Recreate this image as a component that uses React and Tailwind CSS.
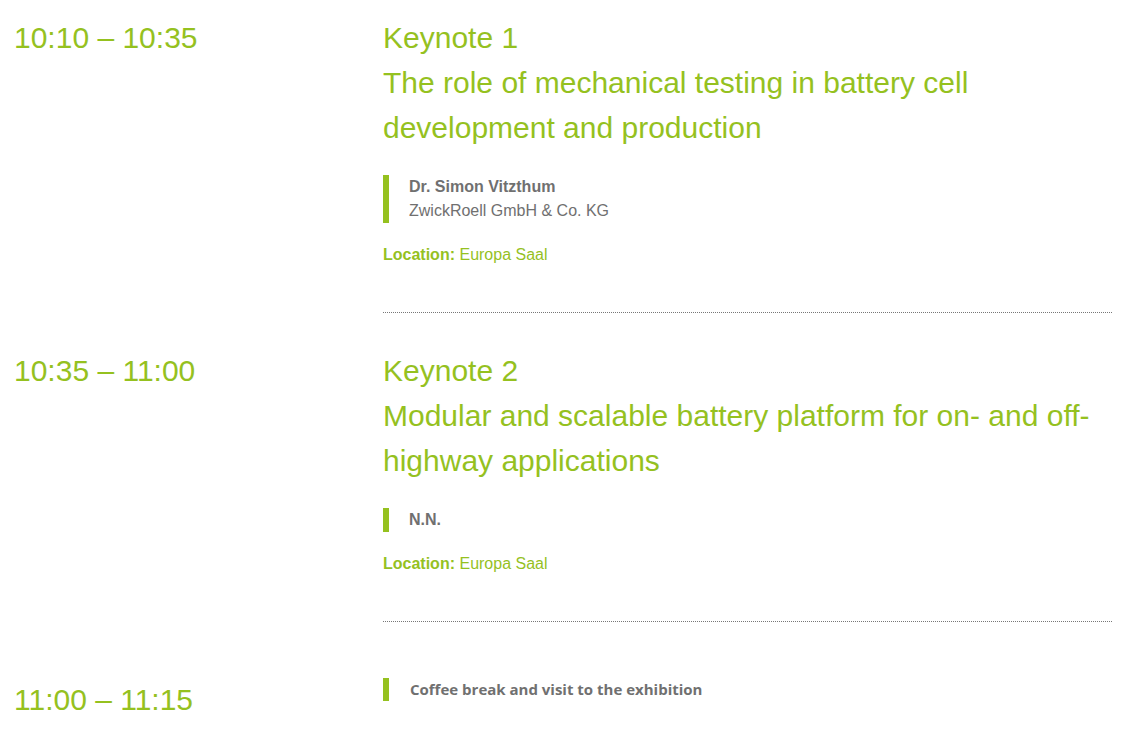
import React from 'react';

const sessions = [
  {
    time: '10:10 – 10:35',
    label: 'Keynote 1',
    title: 'The role of mechanical testing in battery cell development and production',
    speaker: 'Dr. Simon Vitzthum',
    company: 'ZwickRoell GmbH & Co. KG',
    location: 'Europa Saal',
  },
  {
    time: '10:35 – 11:00',
    label: 'Keynote 2',
    title: 'Modular and scalable battery platform for on- and off-highway applications',
    speaker: 'N.N.',
    location: 'Europa Saal',
  },
];

const Session = ({ s, first }) => (
  <div className={`flex ${first ? 'pt-[15px]' : 'pt-[35px]'}`}>
    <div className="w-[369px] shrink-0 text-[30px] leading-[45px] text-[#95c11f]">{s.time}</div>
    <div className="w-[729px]">
      <h2 className="text-[30px] leading-[45px] text-[#95c11f]">{s.label}</h2>
      <h3 className="text-[30px] leading-[45px] text-[#95c11f] pr-[10px]">{s.title}</h3>
      <div className="mt-[25px] border-l-[6px] border-[#95c11f] pl-[20px] text-[16px] leading-[24px] text-[#707070]">
        <div className="font-bold">{s.speaker}</div>
        {s.company && <div>{s.company}</div>}
      </div>
      <div className="mt-[20px] text-[16px] leading-[24px] text-[#95c11f]">
        <span className="font-bold">Location:</span> {s.location}
      </div>
      <div className="mt-[45px] border-b border-dotted border-[#777]" />
    </div>
  </div>
);

export default function App() {
  return (
    <div className="min-h-screen bg-white pl-[14px] font-['Liberation_Sans',Arial,sans-serif]">
      {sessions.map((s, i) => (
        <Session key={i} s={s} first={i === 0} />
      ))}
      <div className="flex pt-[55px]">
        <div className="w-[369px] shrink-0 text-[30px] leading-[45px] text-[#95c11f]">11:00 – 11:15</div>
        <div className="mt-[1px] h-[23px] border-l-[6px] border-[#95c11f] pl-[21px] flex items-center font-['Open_Sans',sans-serif] font-bold text-[15px] text-[#707070]">
          Coffee break and visit to the exhibition
        </div>
      </div>
    </div>
  );
}
